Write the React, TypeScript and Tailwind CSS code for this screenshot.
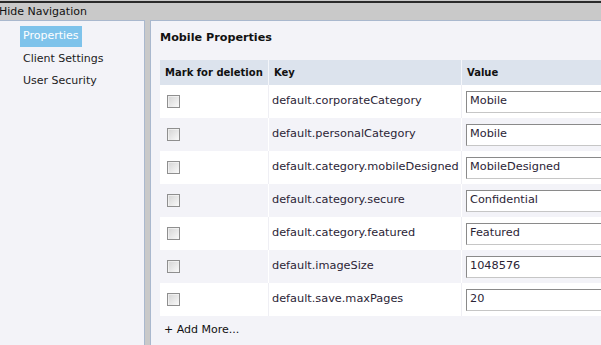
import React from "react";

const rows: [string, string][] = [
  ["default.corporateCategory", "Mobile"],
  ["default.personalCategory", "Mobile"],
  ["default.category.mobileDesigned", "MobileDesigned"],
  ["default.category.secure", "Confidential"],
  ["default.category.featured", "Featured"],
  ["default.imageSize", "1048576"],
  ["default.save.maxPages", "20"],
];

function Checkbox() {
  return (
    <div className="w-[13px] h-[13px] border border-[#8f8f8f] bg-gradient-to-br from-[#d4d4d4] to-[#fafafa] shadow-[inset_1px_1px_0_#ffffff80]" />
  );
}

export default function App() {
  return (
    <div
      className="w-[601px] h-[345px] overflow-hidden flex flex-col bg-[#c9c9c9] text-[11px] text-[#222]"
      style={{ fontFamily: '"DejaVu Sans", Verdana, sans-serif' }}
    >
      <div className="h-[19px] shrink-0 border-t-2 border-[#2a2a2a] mt-[1px] flex items-center">
        <span className="ml-[-1px] leading-[14px] text-[#111]">Hide Navigation</span>
      </div>
      <div className="flex flex-1 min-h-0">
        <div className="w-[145px] shrink-0 bg-[#f3f3f8] border-r border-t border-[#a9b8ce] pt-[5px] pl-[20px] flex flex-col gap-[2px]">
          <div className="self-start h-[21px] px-[3px] bg-[#7ec3eb] text-white flex items-center">Properties</div>
          <div className="self-start h-[20px] px-[3px] flex items-center">Client Settings</div>
          <div className="self-start h-[20px] px-[3px] flex items-center">User Security</div>
        </div>
        <div className="w-[5px] shrink-0" />
        <div className="flex-1 min-w-0 bg-[#f3f3f8] border-l border-t border-[#a9b8ce] pt-[9px] pl-[9px]">
          <div className="font-bold text-[11.2px] leading-[16px] text-[#111]">Mobile Properties</div>
          <div className="mt-[14px] w-[560px]">
            <div className="flex h-[25px] bg-[#dce3ed] font-bold text-[10px] text-[#111]">
              <div className="w-[109px] shrink-0 border-r border-[#f4f6fa] pl-[5px] flex items-center">Mark for deletion</div>
              <div className="w-[193px] shrink-0 border-r border-[#f4f6fa] pl-[5px] flex items-center">Key</div>
              <div className="flex-1 pl-[5px] flex items-center">Value</div>
            </div>
            {rows.map(([k, v], i) => (
              <div key={k} className={`flex h-[33px] ${i % 2 === 0 ? "bg-white" : "bg-[#f3f3f8]"}`}>
                <div className={`w-[109px] shrink-0 border-r ${i % 2 === 0 ? "border-[#efeff4]" : "border-white"} pl-[7px] flex items-center`}>
                  <Checkbox />
                </div>
                <div className={`w-[193px] shrink-0 border-r ${i % 2 === 0 ? "border-[#efeff4]" : "border-white"} pl-[3px] flex items-center text-[11.3px] text-[#2b2436]`}>
                  {k}
                </div>
                <div className="flex-1 pl-[4px] flex items-center">
                  <div className="w-[200px] h-[22px] bg-white border border-t-[#8a8a8a] border-l-[#8a8a8a] border-b-[#c6c6c6] border-r-[#c6c6c6] pl-[3px] flex items-center text-[11.3px] text-[#2b2436]">
                    {v}
                  </div>
                </div>
              </div>
            ))}
          </div>
          <div className="mt-[6px] pl-[4px] leading-[16px] text-[#111]">+ Add More...</div>
        </div>
      </div>
    </div>
  );
}
